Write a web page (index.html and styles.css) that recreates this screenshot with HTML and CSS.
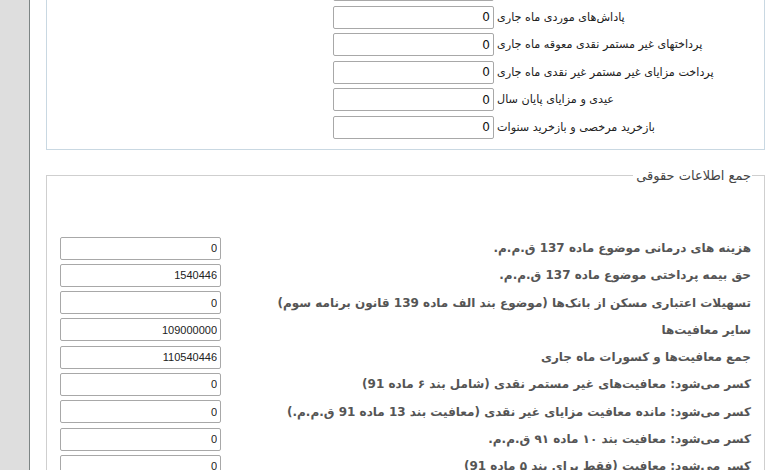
FILE: index.html
```html
<!DOCTYPE html>
<html lang="fa">
<head>
<meta charset="utf-8">
<title>اطلاعات حقوقی</title>
<link rel="stylesheet" href="styles.css">
</head>
<body>
<div class="page">
  <aside class="side"></aside>
  <main class="content">
    <fieldset class="box box-top">
      <div class="row"><input class="field" type="text" value="0"></div>
      <div class="row"><input class="field" type="text" value="0"><span class="lbl">پاداش‌های موردی ماه جاری</span></div>
      <div class="row"><input class="field" type="text" value="0"><span class="lbl">پرداختهای غیر مستمر نقدی معوقه ماه جاری</span></div>
      <div class="row"><input class="field" type="text" value="0"><span class="lbl">پرداخت مزایای غیر مستمر غیر نقدی ماه جاری</span></div>
      <div class="row"><input class="field" type="text" value="0"><span class="lbl">عیدی و مزایای پایان سال</span></div>
      <div class="row"><input class="field" type="text" value="0"><span class="lbl">بازخرید مرخصی و بازخرید سنوات</span></div>
    </fieldset>

    <fieldset class="box box-sum">
      <legend class="legend">جمع اطلاعات حقوقی</legend>
      <div class="sum-row"><span class="slbl">هزینه های درمانی موضوع ماده 137 ق.م.م.</span><input class="sfield" type="text" value="0"></div>
      <div class="sum-row"><span class="slbl">حق بیمه پرداختی موضوع ماده 137 ق.م.م.</span><input class="sfield" type="text" value="1540446"></div>
      <div class="sum-row"><span class="slbl">تسهیلات اعتباری مسکن از بانک‌ها (موضوع بند الف ماده 139 قانون برنامه سوم)</span><input class="sfield" type="text" value="0"></div>
      <div class="sum-row"><span class="slbl">سایر معافیت‌ها</span><input class="sfield" type="text" value="109000000"></div>
      <div class="sum-row"><span class="slbl">جمع معافیت‌ها و کسورات ماه جاری</span><input class="sfield" type="text" value="110540446"></div>
      <div class="sum-row"><span class="slbl">کسر می‌شود: معافیت‌های غیر مستمر نقدی (شامل بند ۶ ماده 91)</span><input class="sfield" type="text" value="0"></div>
      <div class="sum-row"><span class="slbl">کسر می‌شود: مانده معافیت مزایای غیر نقدی (معافیت بند 13 ماده 91 ق.م.م.)</span><input class="sfield" type="text" value="0"></div>
      <div class="sum-row"><span class="slbl">کسر می‌شود: معافیت بند ۱۰ ماده ۹۱ ق.م.م.</span><input class="sfield" type="text" value="0"></div>
      <div class="sum-row"><span class="slbl">کسر می‌شود: معافیت (فقط برای بند ۵ ماده 91)</span><input class="sfield" type="text" value="0"></div>
    </fieldset>
  </main>
</div>
</body>
</html>
```

FILE: styles.css
```css
html, body {
  margin: 0;
  padding: 0;
  height: 100%;
  overflow: hidden;
  background: #ffffff;
}

.page {
  display: flex;
  min-height: 100vh;
}

.side {
  width: 29px;
  flex: none;
  background: #dedede;
  border-right: 1px solid #7d8585;
}

.content {
  flex: 1;
  margin: -40px 15px 0 16px;
  display: flex;
  flex-direction: column;
}

.box {
  margin: 0;
  min-width: 0;
}

.box-top {
  border: 1px solid #c9d8e2;
  padding: 17px 0 10px 286px;
  display: flex;
  flex-direction: column;
  gap: 4.5px;
}

.row {
  display: flex;
  align-items: center;
  height: 23px;
}

.field {
  box-sizing: border-box;
  width: 161px;
  height: 23px;
  margin: 0;
  padding: 0 3px;
  border: 1px solid #a8a8a8;
  border-radius: 2px;
  text-align: right;
  font: 12px "DejaVu Sans", sans-serif;
  color: #111;
  background: #fff;
}

.lbl {
  direction: rtl;
  margin-left: 3px;
  font: 11.2px "DejaVu Sans", sans-serif;
  color: #222;
  white-space: nowrap;
}

.box-sum {
  direction: rtl;
  margin-top: 18px;
  border: 1px solid #cfcfcf;
  border-bottom: none;
  padding: 54px 13px 10px 13px;
  display: flex;
  flex-direction: column;
  gap: 4.3px;
}

.legend {
  padding: 0 1px 0 3px;
  margin-right: -1px;
  font: 13px "DejaVu Sans", sans-serif;
  color: #444;
}

.sum-row {
  display: flex;
  align-items: center;
  justify-content: space-between;
  height: 23px;
}

.slbl {
  font: bold 12px "DejaVu Sans", sans-serif;
  color: #555;
  white-space: nowrap;
}

.sfield {
  box-sizing: border-box;
  width: 161px;
  height: 23px;
  margin: 0;
  padding: 0 3px;
  border: 1px solid #a8a8a8;
  border-radius: 2px;
  direction: ltr;
  text-align: right;
  font: 11px "Liberation Sans", sans-serif;
  color: #222;
  background: #fff;
}
```
